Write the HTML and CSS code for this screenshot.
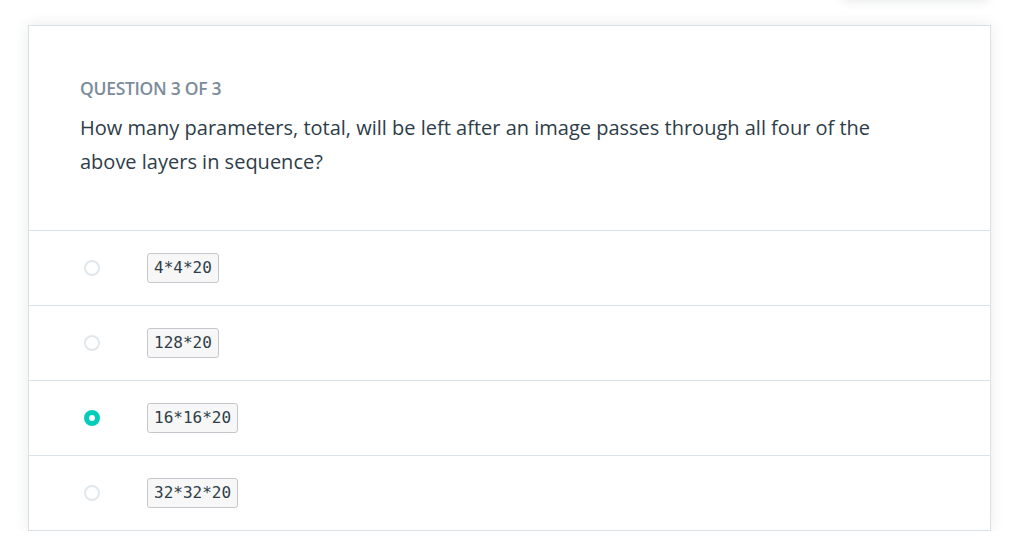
FILE: index.html
```html
<!DOCTYPE html>
<html lang="en">
<head>
<meta charset="utf-8">
<title>Quiz</title>
<link rel="stylesheet" href="styles.css">
</head>
<body>
<div class="floating-menu"></div>
<main class="page">
  <section class="card">
    <header class="card-header">
      <div class="label">QUESTION 3 OF 3</div>
      <p class="question">How many parameters, total, will be left after an image passes through all four of the above layers in sequence?</p>
    </header>
    <ul class="options">
      <li class="option"><span class="radio"></span><code class="chip">4*4*20</code></li>
      <li class="option"><span class="radio"></span><code class="chip">128*20</code></li>
      <li class="option"><span class="radio checked"></span><code class="chip">16*16*20</code></li>
      <li class="option"><span class="radio"></span><code class="chip">32*32*20</code></li>
    </ul>
  </section>
</main>
</body>
</html>
```

FILE: styles.css
```css
* { box-sizing: border-box; }
html, body {
  margin: 0;
  padding: 0;
  background: #ffffff;
  font-family: "Open Sans", "Noto Sans", sans-serif;
  overflow: hidden;
}
.floating-menu {
  position: absolute;
  top: -40px;
  left: 842px;
  width: 146px;
  height: 40px;
  background: #fff;
  box-shadow: 0 2px 10px rgba(46, 61, 73, 0.10);
  border-radius: 4px;
}
.page {
  padding: 25px 0 0 28px;
}
.card {
  width: 963px;
  height: 506px;
  background: #fff;
  border: 1px solid #d9e0e6;
  box-shadow: 0 0 14px rgba(46, 61, 73, 0.10);
}
.card-header {
  padding: 49px 51px 51px 51px;
  border-bottom: 1px solid #dbe2e8;
}
.label {
  font-size: 17.5px;
  line-height: 26px;
  font-weight: 600;
  color: #7d8c9b;
  letter-spacing: -0.3px;
}
.question {
  margin: 10px 0 0 0;
  max-width: 835px;
  font-size: 20px;
  line-height: 34px;
  color: #2e3d49;
}
.options {
  list-style: none;
  margin: 0;
  padding: 0;
}
.option {
  height: 75px;
  display: flex;
  align-items: center;
  padding-left: 55px;
  gap: 47px;
  border-top: 1px solid #dbe2e8;
}
.option:first-child { border-top: none; height: 74px; }
.radio {
  width: 16px;
  height: 16px;
  border-radius: 50%;
  border: 2px solid #e2e7ec;
  background: #fff;
  flex: none;
}
.radio.checked {
  border: 5px solid #02ccba;
}
.chip {
  font-family: "DejaVu Sans Mono", "Liberation Mono", monospace;
  font-size: 16px;
  line-height: 28px;
  padding: 0 6px;
  color: #2e3d49;
  background: #f7f7f7;
  border: 1px solid #c4c7cb;
  border-radius: 3px;
}
```
